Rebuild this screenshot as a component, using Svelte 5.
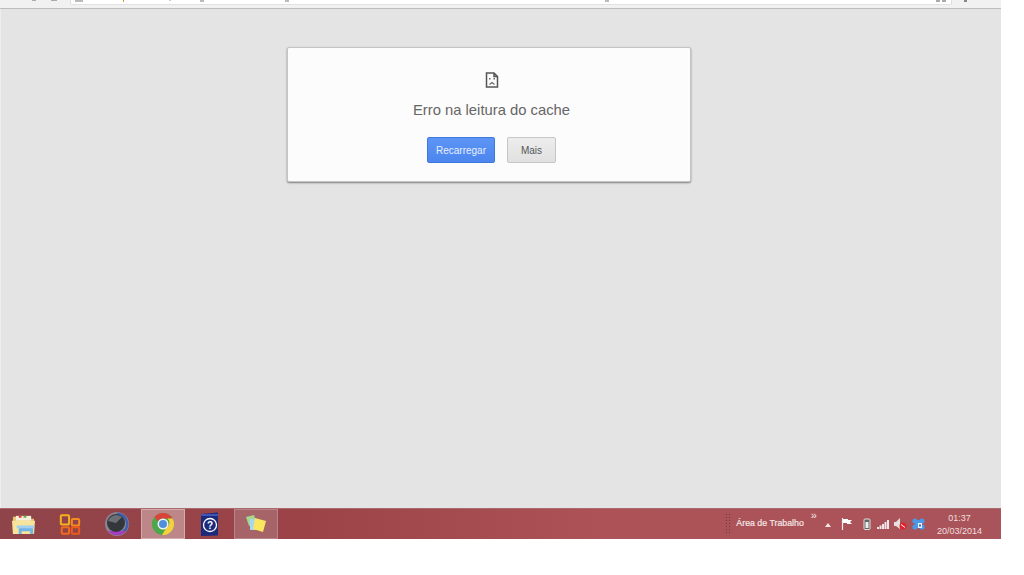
<script>
  const apps = [
    { id: 'explorer' },
    { id: 'office' },
    { id: 'dial' },
    { id: 'chrome', state: 'active' },
    { id: 'help' },
    { id: 'notes', state: 'open' }
  ];
</script>

<div class="screen">
  <header class="toolbar">
    <div class="nav">
      <span class="speck s1"></span>
      <span class="speck s2"></span>
    </div>
    <div class="omnibox">
      <span class="speck s3"></span>
      <span class="speck s4"></span>
      <span class="speck s5"></span>
      <span class="speck s6"></span>
      <span class="speck s7"></span>
      <span class="speck s8"></span>
      <span class="stars"></span>
    </div>
    <div class="menu"><span class="speck s9"></span></div>
  </header>

  <main class="page">
    <section class="card">
      <svg class="sad" width="14" height="16" viewBox="0 0 14 16">
        <path d="M1.500 1h7.500l3.500 3.500v10.500h-11z M9 1v3.500h3.500" fill="none" stroke="#555" stroke-width="1.500" />
        <rect x="4" y="6" width="1.500" height="1.500" fill="#666" />
        <rect x="8.500" y="6" width="1.500" height="1.500" fill="#666" />
        <path d="M4.500 12.500l2.500-2 2.500 2" fill="none" stroke="#666" stroke-width="1.200" />
      </svg>
      <h1>Erro na leitura do cache</h1>
      <div class="actions">
        <button class="primary">Recarregar</button>
        <button class="secondary">Mais</button>
      </div>
    </section>
  </main>

  <footer class="taskbar">
    <div class="apps">
      {#each apps as app}
        <div class="app {app.id} {app.state ?? ''}">
          {#if app.id === 'explorer'}
            <svg width="25" height="23" viewBox="0 0 26 24">
              <path d="M2 4h8l2 2h12v16H2z" fill="#e9c56b" />
              <rect x="5" y="3" width="16" height="5" fill="#f4f1dd" />
              <rect x="8" y="3" width="3" height="2" fill="#d9483b" />
              <rect x="13" y="3" width="3" height="2" fill="#6cb04a" />
              <path d="M1 8h24l-1 14H2z" fill="#f6e39c" />
              <path d="M8 22v-5a2 2 0 0 1 2-2h11a2 2 0 0 1 2 2v5h-3v-3h-9v3z" fill="#6fb4e4" />
              <rect x="6" y="13" width="18" height="3" fill="#9fd0f0" />
            </svg>
          {:else if app.id === 'office'}
            <svg width="22" height="23" viewBox="0 0 24 24" fill="none" stroke-width="2.200">
              <rect x="2" y="2" width="9" height="10" rx="1" stroke="#f5b21e" />
              <rect x="14" y="6" width="8" height="7" rx="1" stroke="#f58a1e" />
              <rect x="3" y="15" width="8" height="7" rx="1" stroke="#f26a1c" />
              <rect x="14" y="15" width="8" height="7" rx="1" stroke="#ee5a1a" />
            </svg>
          {:else if app.id === 'dial'}
            <svg width="24" height="24" viewBox="0 0 24 24">
              <circle cx="12" cy="12" r="12" fill="#8b8390" />
              <path d="M12 .5a11.500 11.500 0 0 1 3 22.600l-1-3a8 8 0 0 0-2-16z" fill="#3f5fb0" />
              <path d="M3 19a11.500 11.500 0 0 0 18 0z" fill="#a63cc0" />
              <circle cx="11" cy="11" r="9" fill="#33363a" />
              <path d="M3 9a9 9 0 0 1 14-4l-6 6z" fill="#6b6f74" />
            </svg>
          {:else if app.id === 'chrome'}
            <svg width="22" height="22" viewBox="0 0 22 22">
              <circle cx="11" cy="11" r="11" fill="#4aa84a" />
              <path d="M11 0a11 11 0 0 1 9.500 5.500H11a5.500 5.500 0 0 0-5 3L2.500 4A11 11 0 0 1 11 0z" fill="#d9433a" />
              <path d="M20.500 5.500A11 11 0 0 1 10 22l4.500-7.500a5.500 5.500 0 0 0 1-9z" fill="#f6cf3e" />
              <circle cx="11" cy="11" r="5.500" fill="#f1f1f1" />
              <circle cx="11" cy="11" r="4" fill="#4f8fdc" />
            </svg>
          {:else if app.id === 'help'}
            <svg width="20" height="25" viewBox="0 0 20 25">
              <path d="M1 2l17-1.500v23L1 24z" fill="#1c2a7c" />
              <rect x="1" y="2" width="17" height="2" fill="#3e56b8" />
              <circle cx="10" cy="13" r="6.500" fill="none" stroke="#fff" stroke-width="1.300" />
              <text x="10" y="16.500" class="mark">?</text>
            </svg>
          {:else}
            <svg width="24" height="20" viewBox="0 0 24 20">
              <path d="M2 3l8-2 3 9-8 2z" fill="#a4d88c" />
              <rect x="6" y="5" width="9" height="11" fill="#a7d6f2" />
              <path d="M11 4l11 3-3 11-10-3z" fill="#fbe75f" />
            </svg>
          {/if}
        </div>
      {/each}
    </div>

    <div class="tray">
      <span class="grip"></span>
      <span class="desk">Área de Trabalho</span>
      <span class="more">»</span>
      <span class="up"></span>
      <svg class="flag" width="12" height="12" viewBox="0 0 12 12">
        <path d="M1.500 0v12" stroke="#eee" stroke-width="1.200" />
        <path d="M2 1h5v1h4l-2 2 2 2H6V5H2z" fill="#fff" />
      </svg>
      <svg class="battery" width="8" height="12" viewBox="0 0 8 12">
        <rect x="1" y="1" width="6" height="10.500" rx="1" fill="#666" stroke="#ddd" />
        <rect x="2.500" y="4" width="3" height="6" fill="#eee" />
      </svg>
      <svg class="signal" width="12" height="9" viewBox="0 0 12 9" fill="#f0e8e8">
        <rect x="0" y="7" width="2" height="2" />
        <rect x="2.500" y="5.500" width="2" height="3.500" />
        <rect x="5" y="4" width="2" height="5" />
        <rect x="7.500" y="2" width="2" height="7" />
        <rect x="10" y="0" width="2" height="9" />
      </svg>
      <svg class="volume" width="13" height="12" viewBox="0 0 13 12">
        <path d="M0 4h2l4-4v11L2 8H0z" fill="#e6e0e0" />
        <circle cx="9" cy="8" r="3.500" fill="#e0242c" />
        <path d="M7 6.500l4 3" stroke="#fff" />
      </svg>
      <svg class="sync" width="13" height="12" viewBox="0 0 13 12" fill="#4a98e6">
        <circle cx="3" cy="3" r="2.600" />
        <circle cx="10" cy="3" r="2.600" />
        <circle cx="3" cy="9" r="2.600" />
        <circle cx="10" cy="9" r="2.600" />
        <rect x="3" y="2" width="7" height="8" />
        <rect x="6" y="5" width="4" height="5" fill="#e8f3ff" />
        <rect x="7" y="6.500" width="2" height="2" fill="#2c6fc0" />
      </svg>
      <div class="clock">
        <span>01:37</span>
        <span>20/03/2014</span>
      </div>
    </div>
  </footer>
</div>

<style>
  :global(body) {
    margin: 0;
    background: #fff;
  }

  .screen {
    width: 1001px;
    height: 539px;
    display: flex;
    flex-direction: column;
    font-family: "Liberation Sans", Arial, sans-serif;
  }

  .toolbar {
    height: 9px;
    flex: none;
    display: flex;
    box-sizing: border-box;
    background: #f1f1f1;
    border-bottom: 1px solid #bdbdbd;
  }

  .nav {
    width: 70px;
    position: relative;
  }

  .omnibox {
    flex: 1;
    height: 4px;
    position: relative;
    background: #fff;
    border-left: 1px solid #ddd;
    border-right: 1px solid #ddd;
    border-bottom: 1px solid #e2e2e2;
    border-radius: 0 0 2px 2px;
  }

  .menu {
    width: 49px;
    position: relative;
  }

  .speck {
    position: absolute;
    top: 0;
    height: 1px;
    width: 4px;
    background: #aaa;
  }

  .s1 { left: 32px; }
  .s2 { left: 51px; width: 6px; }
  .s3 { left: 4px; width: 8px; height: 2px; background: #bbb; }
  .s4 { left: 52px; width: 1px; height: 2px; background: #c99a3c; }
  .s5 { left: 98px; width: 2px; background: #ccc; }
  .s6 { left: 129px; height: 2px; background: #bbb; }
  .s7 { left: 214px; height: 2px; background: #bbb; }
  .s8 { left: 534px; height: 2px; background: #bbb; }
  .s9 { left: 12px; width: 3px; height: 2px; background: #888; }

  .stars {
    position: absolute;
    right: 5px;
    top: 0;
    width: 10px;
    height: 2px;
    background: repeating-linear-gradient(90deg, #aaa 0 4px, transparent 4px 6px);
  }

  .page {
    flex: 1;
    background: #e4e4e4;
    border-left: 1px solid #eee;
    padding-top: 38px;
    padding-left: 286px;
  }

  .card {
    box-sizing: border-box;
    width: 404px;
    height: 135px;
    display: flex;
    flex-direction: column;
    align-items: center;
    padding: 24px 0 0 5px;
    background: #fcfcfc;
    border: 1px solid #c4c4c4;
    border-radius: 2px;
    box-shadow: 0 1px 2px rgba(0, 0, 0, 0.45);
  }

  .sad {
    margin-bottom: 13px;
  }

  h1 {
    margin: 0 0 18px;
    font-size: 14.8px;
    line-height: 18px;
    font-weight: 400;
    color: #666;
  }

  .actions {
    display: flex;
    gap: 12px;
  }

  button {
    box-sizing: border-box;
    height: 26px;
    padding: 0;
    font-family: inherit;
    font-size: 10px;
    border-radius: 2px;
  }

  .primary {
    width: 68px;
    color: #e8effd;
    background: linear-gradient(#5c95f5, #4c86ee);
    border: 1px solid #3f78dc;
  }

  .secondary {
    width: 49px;
    color: #555;
    background: linear-gradient(#ededed, #e1e1e1);
    border: 1px solid #c6c6c6;
  }

  .taskbar {
    height: 31px;
    flex: none;
    display: flex;
    justify-content: space-between;
    background: linear-gradient(90deg, #8f4449, #9c4348 30%, #ad5358 60%, #a9535a);
    border-top: 1px solid #a86a6e;
    box-sizing: border-box;
    color: #f4e6e6;
  }

  .apps {
    display: flex;
  }

  .app {
    width: 47px;
    display: flex;
    align-items: center;
    justify-content: center;
    box-sizing: border-box;
  }

  .app.office {
    width: 46px;
  }

  .app.help {
    width: 49px;
  }

  .app.active {
    width: 44px;
    margin-left: 1px;
    background: #bd8688;
    border: 1px solid #d3abac;
  }

  .app.open {
    width: 44px;
    background: #a66468;
    border: 1px solid #b98487;
  }

  .mark {
    font-size: 10px;
    font-weight: 700;
    fill: #fff;
    text-anchor: middle;
  }

  .tray {
    display: flex;
    align-items: center;
    padding-right: 19px;
  }

  .grip {
    width: 7px;
    height: 22px;
    margin-right: 4px;
    background: radial-gradient(circle, #6f3a3e 1px, transparent 1px) 0 0 / 3px 3px;
  }

  .desk {
    font-size: 8.8px;
    margin: 0 7px 2px 0;
    -webkit-text-stroke: 0.2px #f4e6e6;
  }

  .more {
    font-size: 11px;
    line-height: 10px;
    align-self: flex-start;
    margin: 1px 8px 0 0;
  }

  .up {
    width: 0;
    height: 0;
    margin: 2px 10px 0 0;
    border-left: 3px solid transparent;
    border-right: 3px solid transparent;
    border-bottom: 4px solid #f4e6e6;
  }

  .flag {
    margin-right: 10px;
  }

  .battery {
    margin-right: 6px;
  }

  .signal {
    margin-right: 5px;
  }

  .volume {
    margin-right: 5px;
  }

  .clock {
    display: flex;
    flex-direction: column;
    align-items: center;
    gap: 3px;
    margin-left: 12px;
    font-size: 9px;
    line-height: 10px;
    color: #f0dfdf;
  }
</style>
